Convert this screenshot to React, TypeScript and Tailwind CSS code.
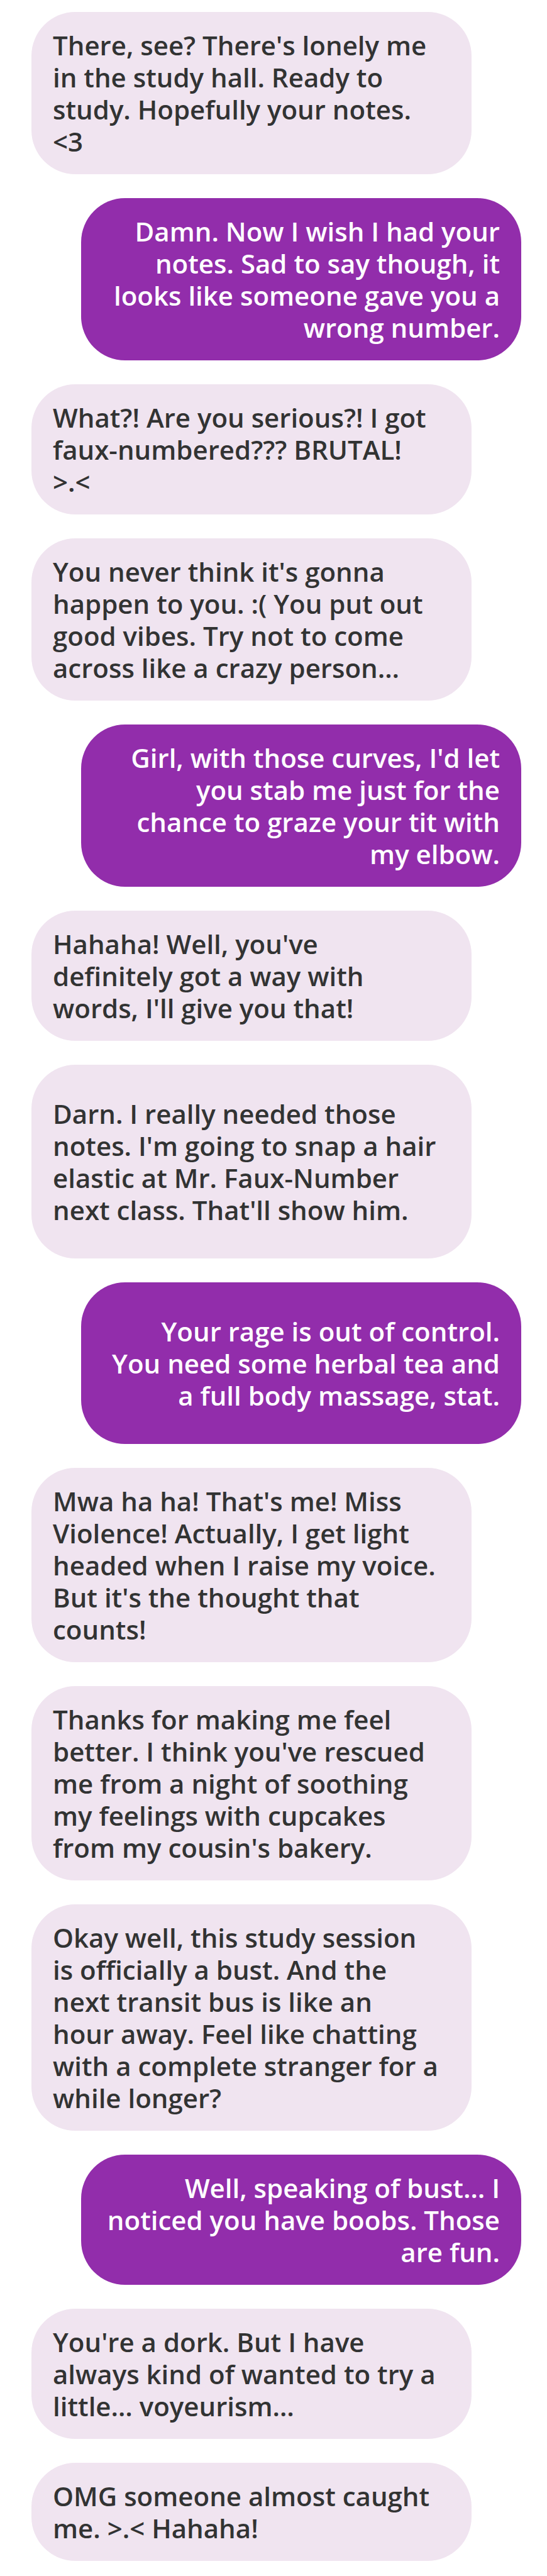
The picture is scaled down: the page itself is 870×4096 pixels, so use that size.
type Message = { from: "them" | "me"; lines: string[]; roomy?: boolean };

const messages: Message[] = [
  { from: "them", lines: ["There, see? There's lonely me", "in the study hall. Ready to", "study. Hopefully your notes.", "<3"] },
  { from: "me", lines: ["Damn. Now I wish I had your", "notes. Sad to say though, it", "looks like someone gave you a", "wrong number."] },
  { from: "them", lines: ["What?! Are you serious?! I got", "faux-numbered??? BRUTAL!", ">.<"] },
  { from: "them", lines: ["You never think it's gonna", "happen to you. :( You put out", "good vibes. Try not to come", "across like a crazy person…"] },
  { from: "me", lines: ["Girl, with those curves, I'd let", "you stab me just for the", "chance to graze your tit with", "my elbow."] },
  { from: "them", lines: ["Hahaha! Well, you've", "definitely got a way with", "words, I'll give you that!"] },
  { from: "them", roomy: true, lines: ["Darn. I really needed those", "notes. I'm going to snap a hair", "elastic at Mr. Faux-Number", "next class. That'll show him."] },
  { from: "me", roomy: true, lines: ["Your rage is out of control.", "You need some herbal tea and", "a full body massage, stat."] },
  { from: "them", lines: ["Mwa ha ha! That's me! Miss", "Violence! Actually, I get light", "headed when I raise my voice.", "But it's the thought that", "counts!"] },
  { from: "them", lines: ["Thanks for making me feel", "better. I think you've rescued", "me from a night of soothing", "my feelings with cupcakes", "from my cousin's bakery."] },
  { from: "them", lines: ["Okay well, this study session", "is officially a bust. And the", "next transit bus is like an", "hour away. Feel like chatting", "with a complete stranger for a", "while longer?"] },
  { from: "me", lines: ["Well, speaking of bust… I", "noticed you have boobs. Those", "are fun."] },
  { from: "them", lines: ["You're a dork. But I have", "always kind of wanted to try a", "little… voyeurism…"] },
  { from: "them", lines: ["OMG someone almost caught", "me. >.< Hahaha!"] },
];

function Bubble({ from, lines, roomy }: Message) {
  const side =
    from === "me"
      ? "self-end bg-[#922dab] text-right text-white"
      : "self-start bg-[#f0e4f0] text-[#323333]";
  return (
    <li className={`w-[700px] max-w-full rounded-[70px] px-[34px] ${roomy ? "py-[52px]" : "py-[27px]"} ${side}`}>
      <p className="whitespace-nowrap">
        {lines.map((line) => (
          <span key={line} className="block">
            {line}
          </span>
        ))}
      </p>
    </li>
  );
}

export default function App() {
  return (
    <main className="min-h-screen bg-white pt-[19px] pr-[41px] pb-5 pl-[50px] font-['Open_Sans','Noto_Sans',sans-serif] text-[42px] leading-[51px] font-semibold">
      <ul className="flex flex-col gap-[38px]">
        {messages.map((message) => (
          <Bubble key={message.lines[0]} {...message} />
        ))}
      </ul>
    </main>
  );
}
